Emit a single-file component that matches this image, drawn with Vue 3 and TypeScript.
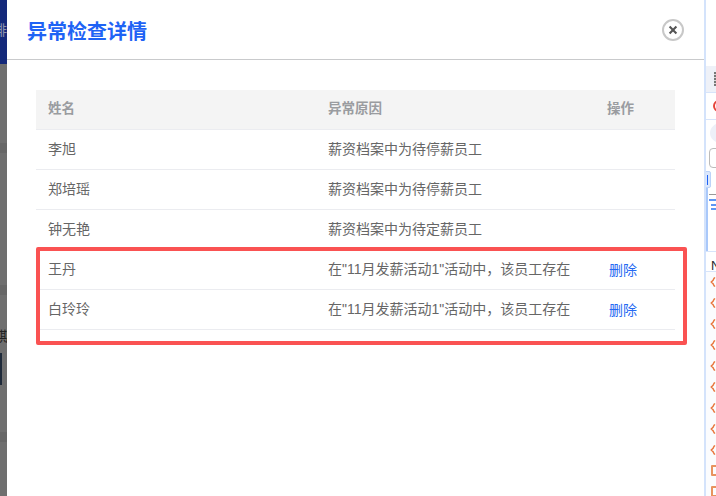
<script setup lang="ts">
interface Row { name: string; reason: string; del: boolean }
const rows: Row[] = [
  { name: '李旭', reason: '薪资档案中为待停薪员工', del: false },
  { name: '郑培瑶', reason: '薪资档案中为待停薪员工', del: false },
  { name: '钟无艳', reason: '薪资档案中为待定薪员工', del: false },
  { name: '王丹', reason: '在"11月发薪活动1"活动中，该员工存在', del: true },
  { name: '白玲玲', reason: '在"11月发薪活动1"活动中，该员工存在', del: true },
]
const marks = Array.from({ length: 9 })
</script>

<template>
  <div class="page">
    <aside class="backdrop">
      <div class="navy"><span class="clip-text">排</span></div>
      <div class="gray">
        <span class="clip-text qi">期</span>
        <span class="tick"></span>
      </div>
    </aside>

    <main class="dialog">
      <header class="head">
        <h1>异常检查详情</h1>
        <button class="close" aria-label="关闭">
          <svg width="12" height="12" viewBox="0 0 12 12">
            <path d="M2.6 2.6l6.8 6.8M9.4 2.6l-6.8 6.8" stroke="#555" stroke-width="2.1" fill="none" />
          </svg>
        </button>
      </header>

      <section class="body">
        <div class="table">
          <div class="row th">
            <div>姓名</div>
            <div>异常原因</div>
            <div>操作</div>
          </div>
          <div v-for="r in rows" :key="r.name" class="row td">
            <div>{{ r.name }}</div>
            <div>{{ r.reason }}</div>
            <div><a v-if="r.del" class="del">删除</a></div>
          </div>
          <div class="mark"></div>
        </div>
      </section>
    </main>

    <aside class="side">
      <div class="s-top"></div>
      <div class="s-tab"><span class="dots"></span></div>
      <div class="s-red"><span class="ring"></span></div>
      <div class="s-tools">
        <span class="pill"></span>
        <span class="box"></span>
      </div>
      <div class="s-tree">
        <span class="handle"></span>
        <span class="rail"></span>
        <span class="l l0"></span>
        <span class="l l1"></span>
        <span class="l l2"></span>
        <span class="l l3"></span>
      </div>
      <div class="s-n">N</div>
      <div v-for="(_, i) in marks" :key="i" class="s-item">
        <svg width="7" height="12" viewBox="0 0 7 12">
          <path d="M6 1C4.2 1 4.2 3 3.6 4L1.5 6l2.1 2C4.2 9 4.2 11 6 11" stroke="#e8763d" stroke-width="1.7" fill="none" />
        </svg>
      </div>
      <div class="s-item"><span class="sq"></span></div>
      <div class="s-item"><span class="sq"></span></div>
    </aside>
  </div>
</template>

<style>
html, body { margin: 0; background: #fff; overflow: hidden; }
</style>

<style scoped>
.page {
  width: 716px;
  height: 496px;
  display: flex;
  overflow: hidden;
  font-family: "Liberation Sans", "Noto Sans CJK SC", sans-serif;
}
.backdrop {
  width: 7px;
  flex: none;
  display: flex;
  flex-direction: column;
  overflow: hidden;
}
.navy {
  height: 64px;
  flex: none;
  background: #14297a;
  position: relative;
}
.gray {
  flex: 1;
  position: relative;
  background: linear-gradient(
    180deg,
    #6f6f6f 0 79px,
    #676767 79px 89px,
    #6f6f6f 89px 221px,
    #676767 221px 231px,
    #6f6f6f 231px 368px,
    #676767 368px 378px,
    #6f6f6f 378px
  );
}
.clip-text {
  position: absolute;
  left: -7px;
  top: 20px;
  font-size: 14px;
  line-height: 20px;
  color: #8d93ad;
}
.qi {
  left: -1px;
  top: 262px;
  color: #222;
}
.tick {
  position: absolute;
  left: 0;
  top: 289px;
  width: 2px;
  height: 32px;
  background: #1e2a3a;
}
.dialog {
  width: 697px;
  flex: none;
  background: #fff;
  display: flex;
  flex-direction: column;
}
.head {
  height: 59px;
  flex: none;
  border-bottom: 1px solid #c9cacc;
  display: flex;
  align-items: center;
  justify-content: space-between;
  padding: 0 20px;
}
h1 {
  margin: 5px 0 0;
  font-size: 20px;
  line-height: 28px;
  font-weight: 700;
  color: #1f63f5;
}
.close {
  width: 22px;
  height: 22px;
  padding: 0;
  margin-top: 1px;
  border: 2px solid #c8c8c8;
  border-radius: 50%;
  background: #fff;
  display: flex;
  align-items: center;
  justify-content: center;
  box-sizing: border-box;
}
.body {
  padding: 30px 29px 0;
}
.table {
  position: relative;
  width: 639px;
}
.row {
  display: grid;
  grid-template-columns: 280px 279px 80px;
  box-sizing: border-box;
  height: 40px;
  padding-bottom: 2px;
  border-bottom: 1px solid #ebecf0;
  align-items: center;
  font-size: 14px;
  line-height: 20px;
}
.row > div {
  padding-left: 12px;
  white-space: nowrap;
}
.th {
  background: #f4f4f4;
  color: #9a9ca0;
  font-weight: 700;
  font-size: 13.5px;
}
.td {
  color: #666;
}
.del {
  display: inline-block;
  padding-top: 2px;
  color: #2468f2;
  margin-left: 2px;
  cursor: pointer;
}
.mark {
  position: absolute;
  left: 0;
  top: 157px;
  width: 651px;
  height: 98px;
  box-sizing: border-box;
  border: 4px solid #fa5252;
  border-radius: 2px;
  pointer-events: none;
}
.side {
  flex: 1;
  box-sizing: border-box;
  border-left: 2px solid #d4e3fb;
  background: #fff;
  display: flex;
  flex-direction: column;
  overflow: hidden;
}
.s-top { height: 66px; flex: none; }
.s-tab {
  height: 26px;
  flex: none;
  background: #eef1f8;
  border-bottom: 1px solid #d7e4fa;
  position: relative;
}
.dots {
  position: absolute;
  left: 8px;
  top: 6px;
  width: 3px;
  height: 14px;
  background: repeating-linear-gradient(180deg, #777 0 2px, #ddd 2px 3px);
}
.s-red {
  height: 26px;
  flex: none;
  border-bottom: 1px solid #d7e4fa;
  position: relative;
}
.ring {
  position: absolute;
  left: 7px;
  top: 7px;
  width: 12px;
  height: 12px;
  box-sizing: border-box;
  border: 2px solid #e5443a;
  border-radius: 50%;
}
.s-tools {
  height: 51px;
  flex: none;
  position: relative;
}
.pill {
  position: absolute;
  left: 4px;
  top: 3px;
  width: 22px;
  height: 20px;
  border-radius: 50%;
  background: #edf0f8;
}
.box {
  position: absolute;
  left: 3px;
  top: 28px;
  width: 18px;
  height: 20px;
  box-sizing: border-box;
  border: 1px solid #bbb;
  border-radius: 4px;
}
.s-tree {
  height: 80px;
  flex: none;
  position: relative;
  border-bottom: 1px solid #d7e4fa;
}
.handle {
  position: absolute;
  left: -2px;
  top: 0;
  width: 7px;
  height: 17px;
  background: #dbe7fc;
  border: 1px solid #bcd3f8;
  border-radius: 2px;
  box-sizing: border-box;
}
.handle::after {
  content: "";
  position: absolute;
  left: 2px;
  top: 3px;
  width: 1px;
  height: 10px;
  background: #1f63f5;
}
.rail {
  position: absolute;
  left: 0;
  top: 17px;
  width: 2px;
  height: 63px;
  background: #a9c8fa;
}
.l {
  position: absolute;
  height: 2px;
  background: #5e96f4;
}
.l0 { left: 3px; top: 23px; width: 8px; height: 1px; background: #999; }
.l1 { left: 3px; top: 28px; width: 8px; }
.l2 { left: 5px; top: 33px; width: 6px; }
.l3 { left: 5px; top: 37px; width: 5px; }
.s-n {
  height: 15px;
  padding-top: 4px;
  flex: none;
  padding-left: 5px;
  font-family: "Liberation Sans", sans-serif;
  font-size: 13px;
  line-height: 19px;
  color: #26282c;
  border-bottom: 1px solid #d7e4fa;
  overflow: hidden;
}
.s-item {
  height: 20.9px;
  flex: none;
  display: flex;
  align-items: center;
  padding-left: 4px;
  background: #fbfcfe;
}
.sq {
  flex: none;
  width: 9px;
  height: 11px;
  margin-left: 1px;
  box-sizing: border-box;
  border: 2px solid #e8935f;
  border-radius: 1px;
}
</style>
